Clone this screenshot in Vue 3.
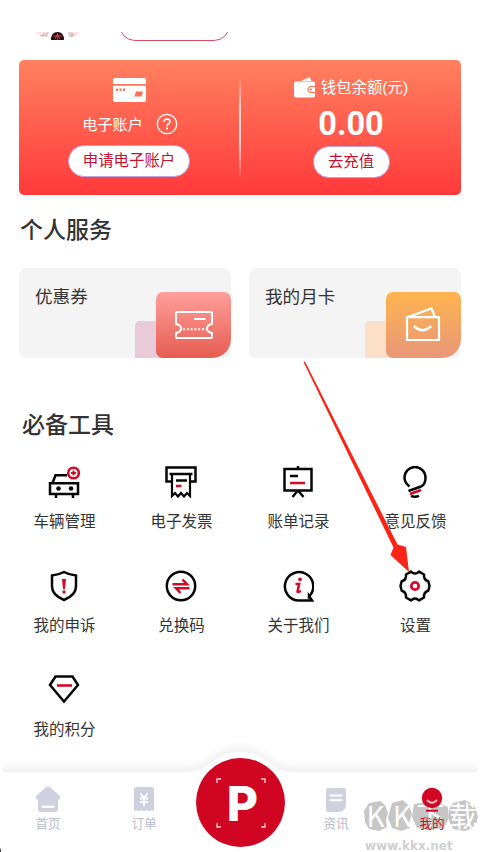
<script setup>
const tools = [
  { id: 'car', label: '车辆管理' },
  { id: 'invoice', label: '电子发票' },
  { id: 'bill', label: '账单记录' },
  { id: 'bulb', label: '意见反馈' },
  { id: 'shield', label: '我的申诉' },
  { id: 'exchange', label: '兑换码' },
  { id: 'about', label: '关于我们' },
  { id: 'gear', label: '设置' },
  { id: 'gem', label: '我的积分' },
]
</script>

<template>
  <main class="page">
    <header class="top">
      <svg class="avatar" width="50" height="9" viewBox="0 0 50 9">
        <path d="M0 0H14L12 5Q5 4 0 0Z" fill="#fde3e5" />
        <path d="M8 1L14 0L12 5L8 4Z" fill="#d6d0d0" />
        <path d="M5 3L9 3L8 5Z" fill="#f59a83" />
        <path d="M16 8Q16 0 22.500 0Q29 0 29 8Z" fill="#2c0b0d" />
        <path d="M18 4H27M20 7L22.500 2L25 7M22.500 1V8" stroke="#c8474b" stroke-width=".9" fill="none" />
        <path d="M33 0H45Q42 4 35 5Z" fill="#fde3e5" />
        <path d="M33 0L39 1L37 5L34 5Z" fill="#d6d0d0" />
        <path d="M36 3L40 2L37 5Z" fill="#f59a83" />
      </svg>
      <div class="pill"></div>
    </header>

    <section class="account">
      <div class="half">
        <svg class="bank" width="33" height="24" viewBox="0 0 33 24">
          <path d="M0 6V2Q0 0 2 0H31Q33 0 33 2V6Z" fill="#fff" />
          <path d="M0 7.700H33V22Q33 24 31 24H2Q0 24 0 22Z" fill="#fff" />
          <path d="M3 10.500h2v2.500h-2zM6.500 10.500h2v2.500h-2zM10 10.500h2v2.500h-2zM23 13.500H30L28.500 18.500H21.500Z" fill="#ff7059" />
        </svg>
        <div class="line left-line">
          <span>电子账户</span>
          <svg width="22" height="22" viewBox="0 0 22 22" fill="none" stroke="#fff">
            <circle cx="11" cy="11" r="9.700" stroke-width="1.300" />
            <path d="M8 8.700Q8 6 11 6Q14 6 14 8.600Q14 10 12.300 11Q11 11.800 11 13.300" stroke-width="1.600" />
            <path d="M11 14.500v2" stroke-width="1.800" />
          </svg>
        </div>
        <button class="btn apply">申请电子账户</button>
      </div>
      <div class="divider"></div>
      <div class="half right">
        <div class="line wallet-line">
          <svg width="22" height="21" viewBox="0 0 22 21">
            <path d="M7 4L14.500 .4Q15.500 0 16 1L17.500 4Z" fill="#fff" />
            <path d="M2 4.500H19Q21 4.500 21 6.500V9H16.500Q13.500 9.500 13.500 12.500Q13.500 15.500 16.500 16H21V18.500Q21 20.500 19 20.500H2Q0 20.500 0 18.500V6.500Q0 4.500 2 4.500Z" fill="#fff" />
            <path d="M17 10H21V15H17Q14.700 15 14.700 12.500Q14.700 10 17 10Z" fill="#fff" />
            <circle cx="17" cy="12.500" r="1.100" fill="#ff7059" />
          </svg>
          <span>钱包余额(元)</span>
        </div>
        <strong class="amount">0.00</strong>
        <button class="btn charge">去充值</button>
      </div>
    </section>

    <h2 class="title">个人服务</h2>
    <section class="services">
      <article class="service coupon">
        <span class="name">优惠券</span>
        <div class="art">
          <i class="patch"></i>
          <div class="tile">
            <svg width="38" height="28" viewBox="0 0 38 28" fill="none" stroke="#fff" stroke-width="2">
              <path d="M2 1H36Q37 1 37 2V13Q32 14 32 17.500Q32 21 37 22V26Q37 27 36 27H2Q1 27 1 26V22Q6 21 6 17.500Q6 14 1 13V2Q1 1 2 1Z" />
              <path d="M19 8H30.500" />
              <path d="M8 18.200H31" stroke-dasharray="2 1.800" />
            </svg>
          </div>
        </div>
      </article>
      <article class="service month">
        <span class="name">我的月卡</span>
        <div class="art">
          <i class="patch"></i>
          <div class="tile">
            <svg width="36" height="36" viewBox="0 0 36 36" fill="none" stroke="#fff" stroke-width="2.200">
              <path d="M2 11.200H34V34H2Z" />
              <path d="M3 11L26.500 2.500L30 11" />
              <path d="M9 20Q17.500 28.500 26 20" stroke-width="2.500" />
            </svg>
          </div>
        </div>
      </article>
    </section>

    <h2 class="title tools-title">必备工具</h2>
    <section class="tools">
      <div v-for="t in tools" :key="t.id" class="tool">
        <svg width="32" height="32" viewBox="0 0 32 32" fill="none" stroke="#060606" stroke-width="2.500">
          <template v-if="t.id === 'car'">
            <path d="M2 17.300H30V28H2ZM4.500 17L7.500 9.300H19M8 28V32M25 28V32" />
            <circle cx="10.500" cy="22.500" r="2.300" fill="#060606" stroke="none" />
            <circle cx="23" cy="22.500" r="2.300" fill="#060606" stroke="none" />
            <circle cx="25.500" cy="7" r="5.300" fill="#fff" stroke="#d30a27" stroke-width="2.600" />
            <path d="M25.500 4.500V9.500M23 7H28" stroke="#d30a27" stroke-width="1.900" />
          </template>
          <template v-else-if="t.id === 'invoice'">
            <path d="M6 15.500H1.500V1.500H30.500V15.500H26" />
            <path d="M4.500 8H27.500" />
            <path d="M7 8V30L10 27L13 30.500L16 27L19 30.500L22 27L25 30V8" stroke-width="2.200" />
            <path d="M11 14.500H22" />
            <path d="M11 20H16.500" stroke="#d30a27" />
          </template>
          <template v-else-if="t.id === 'bill'">
            <path d="M2.500 3H29.500V24.500H2.500ZM16 0V3M15.500 25L10.500 31M16.500 25L21.500 31" />
            <path d="M8 10H16" />
            <path d="M8 17H23" stroke="#d30a27" />
          </template>
          <template v-else-if="t.id === 'bulb'">
            <path d="M10.500 20.500Q5.500 16.500 5.500 11.500A10.500 10.500 0 0 1 26.500 11.500Q26.500 18.500 22 20.500L9.500 25" />
            <path d="M11 28L22 24" stroke="#d30a27" />
            <path d="M12 29.800Q16 31.500 20 29.800" />
          </template>
          <template v-else-if="t.id === 'shield'">
            <path d="M16 2Q10.500 5 4 5.500V16.500Q4 25 16 30Q28 25 28 16.500V5.500Q21.500 5 16 2Z" />
            <path d="M14 9H18L17 19H15Z" fill="#d30a27" stroke="none" />
            <circle cx="16" cy="22" r="1.700" fill="#d30a27" stroke="none" />
          </template>
          <template v-else-if="t.id === 'exchange'">
            <circle cx="16" cy="16" r="14.200" />
            <path d="M7.500 14.300H22L17.500 9.500M24.500 18.200H11L15.500 23" stroke="#d30a27" />
          </template>
          <template v-else-if="t.id === 'about'">
            <path d="M27 26.500A14.200 14.200 0 1 0 16 30.500H30L27 26Z" />
            <circle cx="18" cy="9.300" r="1.900" fill="#d30a27" stroke="none" />
            <path d="M13.500 14H17.200L15.500 21.500Q15.500 22.700 19 21" stroke="#d30a27" />
          </template>
          <template v-else-if="t.id === 'gear'">
            <path d="M12 1.600Q16 5.500 20 1.600L25 4.500Q24.500 10 29.300 11.300L30.500 16L29.300 20.700Q24.500 22 25 27.500L20 30.400Q16 26.500 12 30.400L7 27.500Q7.500 22 2.700 20.700L1.500 16L2.700 11.300Q7.500 10 7 4.500Z" stroke-linejoin="round" />
            <circle cx="16" cy="16" r="3.700" stroke="#d30a27" stroke-width="2.700" />
          </template>
          <template v-else>
            <path d="M7.500 2.500H24.500L30 11L16 27.500L2 11Z" />
            <path d="M9 11.500H24" stroke="#d30a27" stroke-width="2.600" />
          </template>
        </svg>
        <span>{{ t.label }}</span>
      </div>
    </section>

    <nav class="nav">
      <div class="nav-clip">
        <svg class="nav-bg" width="520" height="130" viewBox="-23 -18 520 130">
          <path d="M-23 32H185C212 32 212 12 240 12C268 12 268 32 295 32H497V130H-23Z" fill="#fff" />
        </svg>
      </div>
      <div class="tab">
        <svg width="26" height="26" viewBox="0 0 26 26">
          <path d="M11.500 .7Q13 -.4 14.500 .7L24.500 9.500Q26.500 12.500 23 14V23.500Q23 26 20.500 26H5.500Q3 26 3 23.500V14Q-.5 12.500 1.500 9.500Z" fill="#cfd2de" />
          <path d="M7.500 20.800H18.500" stroke="#fff" stroke-width="2.200" stroke-linecap="round" />
        </svg>
        <span>首页</span>
      </div>
      <div class="tab">
        <svg width="26" height="26" viewBox="0 0 26 26">
          <path d="M3 3Q3 1 5 1H21Q23 1 23 3V25.500L21 24L18.500 25.500L16 24L13 25.500L10 24L7.500 25.500L5 24L3 25.500Z" fill="#cfd2de" />
          <path d="M9.500 7.500L13 12L16.500 7.500M9 12.500H17M9 16H17M13 12V20" stroke="#fff" stroke-width="1.800" fill="none" />
        </svg>
        <span>订单</span>
      </div>
      <div class="scan">
        <svg class="corners" width="50" height="50" viewBox="0 0 50 50" fill="none" stroke="#fbd5da" stroke-width="1.300">
          <path d="M1 5V1H5M45 1H49V5M49 45V49H45M5 49H1V45" />
        </svg>
        <b>P</b>
      </div>
      <div class="tab">
        <svg width="26" height="26" viewBox="0 0 26 26">
          <path d="M3 4Q3 2 5 2H21Q23 2 23 4V18Q23 26 15 26H5Q3 26 3 24Z" fill="#cfd2de" />
          <path d="M7.500 9.500H18.500M7.500 14.200H18.500" stroke="#fff" stroke-width="2" stroke-linecap="round" />
        </svg>
        <span>资讯</span>
      </div>
      <div class="tab active">
        <svg width="26" height="26" viewBox="0 0 26 26">
          <circle cx="13" cy="12" r="10.200" fill="#d10724" />
          <path d="M8.500 14.500Q13 19 17.500 14.500" stroke="#f7bdc4" stroke-width="1.800" fill="none" stroke-linecap="round" />
          <path d="M7 24.700H19" stroke="#d10724" stroke-width="2" />
        </svg>
        <span>我的</span>
      </div>
    </nav>

    <div class="mark">
      <svg class="blobs" width="120" height="36" viewBox="0 0 120 36" fill="#c6c6c6">
        <path d="M8 5L19 3L24 7L27 15L25 22L26 29L18 33L8 31L4 24L3 13Z" />
        <path d="M31 5L42 2L48 8L51 16L48 25L49 30L40 33L31 30L27 20L29 12Z" />
        <path d="M53 6L66 4L78 5L87 9L88 20L83 30L68 32L56 30L51 19Z" />
        <path d="M92 5L104 2L114 8L117 19L114 29L104 33L92 31L88 23L88 12Z" />
      </svg>
      <div class="mark-name"><span>K</span><span>K</span><span>下</span><span>载</span></div>
      <div class="mark-url">www.kkx.net</div>
    </div>

    <svg class="arrow" width="480" height="852" viewBox="0 0 480 852">
      <path d="M303.500 362L305 361.500L397.500 544.500L406 547L409 572L390.500 555L393.500 547.500Z" fill="#fb2416" />
      <path d="M0 848L1 849.500V852H0Z" fill="#444" />
    </svg>
  </main>
</template>

<style>
body {
  background: #fff;
}
</style>

<style scoped>
.page {
  position: relative;
  display: flex;
  flex-direction: column;
  width: 480px;
  height: 852px;
  overflow: hidden;
  background: #fff;
  color: #333;
  font-family: Roboto, "Noto Sans CJK SC", sans-serif;
}
.top {
  display: flex;
  gap: 34px;
  height: 9px;
  margin-top: 32px;
  padding-left: 35px;
  overflow: hidden;
}
.avatar {
  flex: none;
}
.pill {
  box-sizing: border-box;
  width: 111px;
  height: 32px;
  margin-top: -23px;
  border: 1px solid #dc4a60;
  border-radius: 16px;
}
.account {
  display: flex;
  align-items: center;
  box-sizing: border-box;
  width: 442px;
  height: 135px;
  margin: 19px 0 0 19px;
  border-radius: 5px;
  background: linear-gradient(#ff8160, #ff393b);
  color: #fff;
}
.half {
  display: flex;
  flex-direction: column;
  align-items: center;
  align-self: stretch;
  width: 220px;
}
.divider {
  width: 2px;
  height: 104px;
  background: linear-gradient(rgba(255, 255, 255, 0), rgba(255, 255, 255, .75) 30%, rgba(255, 255, 255, .75) 65%, rgba(255, 255, 255, 0));
}
.bank {
  margin-top: 18px;
}
.line {
  display: flex;
  align-items: center;
  font-size: 15.200px;
  line-height: 22px;
}
.line span {
  padding-top: 1px;
}
.left-line {
  gap: 13px;
  height: 22px;
  margin: 11px 0 10px 2px;
}
.wallet-line {
  gap: 5px;
  height: 22px;
  margin-top: 16px;
}
.wallet-line span {
  padding-top: 2px;
  font-size: 15.400px;
}
.btn {
  box-sizing: border-box;
  height: 32px;
  padding: 0;
  border: 1px solid #b9a5df;
  border-radius: 16px;
  background: #fff;
  color: #c5102f;
  font: 15.400px/30px Roboto, "Noto Sans CJK SC", sans-serif;
}
.apply {
  width: 122px;
}
.charge {
  width: 77px;
}
.amount {
  height: 38px;
  margin: 7px 0 3px;
  font-size: 32.500px;
  line-height: 38px;
}
.title {
  margin: 20px 0 0 20px;
  font-size: 23px;
  font-weight: 500;
  line-height: 32px;
}
.services {
  display: flex;
  gap: 19px;
  margin: 21px 19px 0;
}
.service {
  display: flex;
  flex: 1;
  flex-direction: column;
  justify-content: space-between;
  height: 90px;
  border-radius: 7px;
  background: #f4f4f4;
}
.month {
  margin-left: -1px;
}
.name {
  height: 24px;
  font-size: 17.600px;
  line-height: 58px;
  padding-left: 16px;
}
.art {
  display: flex;
  align-items: flex-end;
  justify-content: flex-end;
}
.patch {
  width: 27px;
  height: 37px;
  margin-right: -6px;
  border-radius: 5px 0 0 0;
  background: #e9cad8;
}
.tile {
  display: flex;
  align-items: center;
  justify-content: center;
  width: 75px;
  height: 66px;
  border-radius: 7px 7px 19px 7px;
  background: linear-gradient(#ff9f9b, #e65c51);
}
.month .patch {
  background: #fbe0c7;
}
.month .tile {
  background: linear-gradient(#ffb44f, #e89778);
}
.month .tile svg {
  margin: -3px 2px 0 0;
}
.tools-title {
  margin: 52px 0 0 22px;
}
.tools {
  display: grid;
  grid-template-columns: repeat(4, 117px);
  grid-auto-rows: 104px;
  margin: 24px 0 0 6px;
}
.tool {
  display: flex;
  flex-direction: column;
  align-items: center;
  gap: 12px;
  font-size: 15.500px;
  line-height: 24px;
}
.tool svg {
  margin-right: 1px;
}
.nav {
  position: absolute;
  left: 0;
  bottom: 0;
  display: grid;
  grid-template-columns: repeat(5, 96px);
  width: 480px;
  height: 112px;
}
.nav-clip {
  position: absolute;
  inset: -18px 3px 0;
  overflow: hidden;
}
.nav-bg {
  display: block;
  margin-left: -26px;
  filter: drop-shadow(0 -4px 5px rgba(0, 0, 0, .07));
}
.tab {
  position: relative;
  z-index: 3;
  display: flex;
  flex-direction: column;
  align-items: center;
  padding-top: 46px;
  color: #b9bcc8;
  font-size: 12.600px;
  line-height: 24px;
}
.active {
  color: #d10724;
}
.scan {
  position: relative;
  display: flex;
  align-items: center;
  justify-content: center;
  justify-self: center;
  width: 89px;
  height: 89px;
  margin-top: 18px;
  border-radius: 50%;
  background: #d00522;
  color: #fff;
}
.corners {
  position: absolute;
  left: 20px;
  top: 20px;
}
.scan b {
  padding: 2px 0 0 5px;
  font: 800 48px/60px Inter, sans-serif;
}
.mark {
  position: absolute;
  z-index: 2;
  left: 361px;
  top: 798px;
  width: 119px;
  color: #fff;
}
.blobs {
  position: absolute;
  left: 0;
  top: 0;
}
.mark-name {
  position: relative;
  display: grid;
  grid-template-columns: 29px 24px 33px 32px;
  height: 39px;
  font: 28px/34px "Noto Sans CJK SC", sans-serif;
  text-align: center;
}
.mark-url {
  padding-left: 4px;
  color: #cfcfd1;
  font: bold 12px/18px "DejaVu Sans", sans-serif;
}
.arrow {
  position: absolute;
  inset: 0;
  z-index: 4;
  pointer-events: none;
}
</style>
